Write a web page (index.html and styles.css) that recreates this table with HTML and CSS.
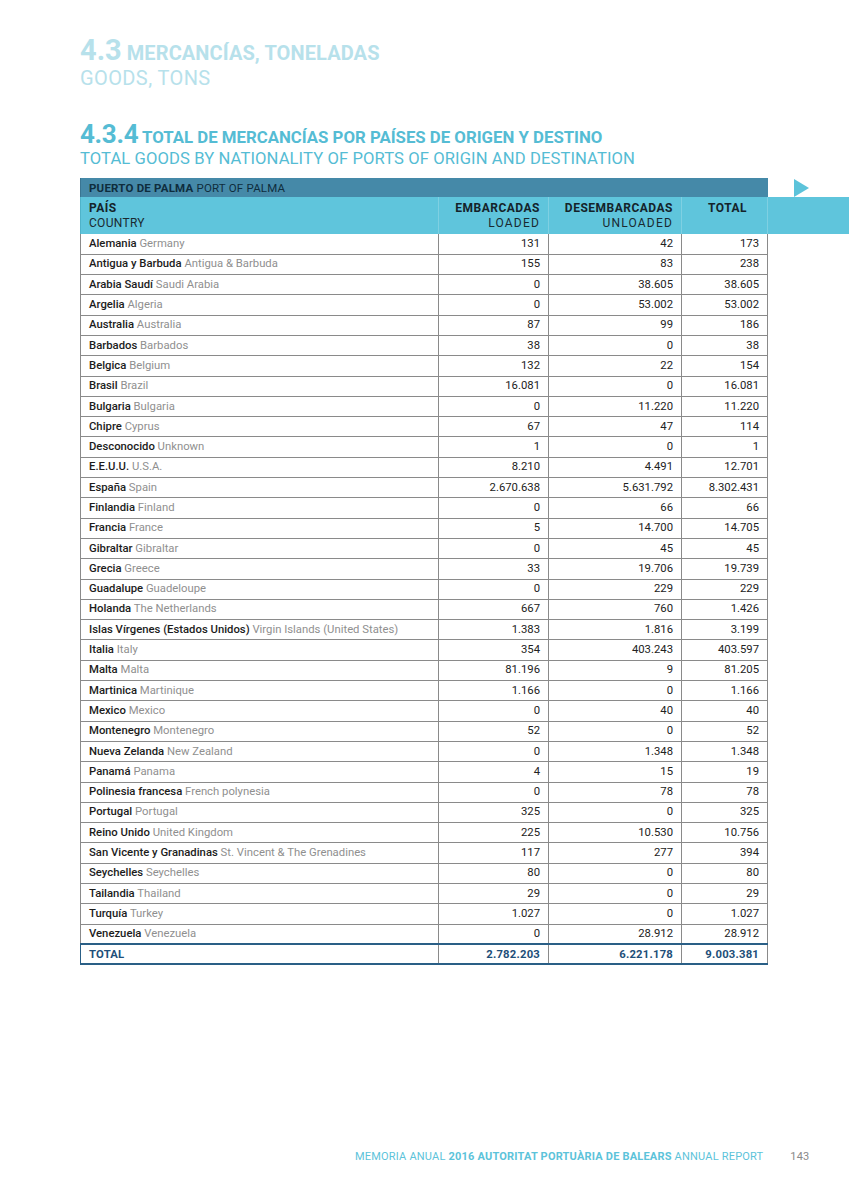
FILE: index.html
```html
<!DOCTYPE html>
<html lang="es">
<head>
<meta charset="utf-8">
<title>4.3 Mercancías, toneladas</title>
<link rel="stylesheet" href="styles.css">
</head>
<body>
<div class="page">
  <header class="section-head">
    <h1 class="h1"><span class="num">4.3</span> MERCANCÍAS, TONELADAS</h1>
    <div class="h1-sub">GOODS, TONS</div>
  </header>

  <section class="sub-head">
    <h2 class="h2"><span class="num">4.3.4</span> TOTAL DE MERCANCÍAS POR PAÍSES DE ORIGEN Y DESTINO</h2>
    <div class="h2-sub">TOTAL GOODS BY NATIONALITY OF PORTS OF ORIGIN AND DESTINATION</div>
  </section>

  <table class="data">
    <colgroup>
      <col class="c-country"><col class="c-emb"><col class="c-des"><col class="c-tot"><col class="c-out">
    </colgroup>
    <thead>
      <tr class="band">
        <th colspan="4" class="band-cell"><b>PUERTO DE PALMA</b> PORT OF PALMA</th>
        <th class="tri-cell"><span class="tri"></span></th>
      </tr>
      <tr class="head">
        <th class="l"><b>PAÍS</b><br>COUNTRY</th>
        <th class="r"><b>EMBARCADAS</b><br><span class="wide">LOADED</span></th>
        <th class="r"><b>DESEMBARCADAS</b><br><span class="wide">UNLOADED</span></th>
        <th class="r top"><b>TOTAL</b></th>
        <th class="ext"></th>
      </tr>
    </thead>
    <tbody>
      <tr><td><b>Alemania</b> <span class="en">Germany</span></td><td>131</td><td>42</td><td>173</td><td class="ext"></td></tr>
      <tr><td><b>Antigua y Barbuda</b> <span class="en">Antigua &amp; Barbuda</span></td><td>155</td><td>83</td><td>238</td><td class="ext"></td></tr>
      <tr><td><b>Arabia Saudí</b> <span class="en">Saudi Arabia</span></td><td>0</td><td>38.605</td><td>38.605</td><td class="ext"></td></tr>
      <tr><td><b>Argelia</b> <span class="en">Algeria</span></td><td>0</td><td>53.002</td><td>53.002</td><td class="ext"></td></tr>
      <tr><td><b>Australia</b> <span class="en">Australia</span></td><td>87</td><td>99</td><td>186</td><td class="ext"></td></tr>
      <tr><td><b>Barbados</b> <span class="en">Barbados</span></td><td>38</td><td>0</td><td>38</td><td class="ext"></td></tr>
      <tr><td><b>Belgica</b> <span class="en">Belgium</span></td><td>132</td><td>22</td><td>154</td><td class="ext"></td></tr>
      <tr><td><b>Brasil</b> <span class="en">Brazil</span></td><td>16.081</td><td>0</td><td>16.081</td><td class="ext"></td></tr>
      <tr><td><b>Bulgaria</b> <span class="en">Bulgaria</span></td><td>0</td><td>11.220</td><td>11.220</td><td class="ext"></td></tr>
      <tr><td><b>Chipre</b> <span class="en">Cyprus</span></td><td>67</td><td>47</td><td>114</td><td class="ext"></td></tr>
      <tr><td><b>Desconocido</b> <span class="en">Unknown</span></td><td>1</td><td>0</td><td>1</td><td class="ext"></td></tr>
      <tr><td><b>E.E.U.U.</b> <span class="en">U.S.A.</span></td><td>8.210</td><td>4.491</td><td>12.701</td><td class="ext"></td></tr>
      <tr><td><b>España</b> <span class="en">Spain</span></td><td>2.670.638</td><td>5.631.792</td><td>8.302.431</td><td class="ext"></td></tr>
      <tr><td><b>Finlandia</b> <span class="en">Finland</span></td><td>0</td><td>66</td><td>66</td><td class="ext"></td></tr>
      <tr><td><b>Francia</b> <span class="en">France</span></td><td>5</td><td>14.700</td><td>14.705</td><td class="ext"></td></tr>
      <tr><td><b>Gibraltar</b> <span class="en">Gibraltar</span></td><td>0</td><td>45</td><td>45</td><td class="ext"></td></tr>
      <tr><td><b>Grecia</b> <span class="en">Greece</span></td><td>33</td><td>19.706</td><td>19.739</td><td class="ext"></td></tr>
      <tr><td><b>Guadalupe</b> <span class="en">Guadeloupe</span></td><td>0</td><td>229</td><td>229</td><td class="ext"></td></tr>
      <tr><td><b>Holanda</b> <span class="en">The Netherlands</span></td><td>667</td><td>760</td><td>1.426</td><td class="ext"></td></tr>
      <tr><td><b>Islas Vírgenes (Estados Unidos)</b> <span class="en">Virgin Islands (United States)</span></td><td>1.383</td><td>1.816</td><td>3.199</td><td class="ext"></td></tr>
      <tr><td><b>Italia</b> <span class="en">Italy</span></td><td>354</td><td>403.243</td><td>403.597</td><td class="ext"></td></tr>
      <tr><td><b>Malta</b> <span class="en">Malta</span></td><td>81.196</td><td>9</td><td>81.205</td><td class="ext"></td></tr>
      <tr><td><b>Martinica</b> <span class="en">Martinique</span></td><td>1.166</td><td>0</td><td>1.166</td><td class="ext"></td></tr>
      <tr><td><b>Mexico</b> <span class="en">Mexico</span></td><td>0</td><td>40</td><td>40</td><td class="ext"></td></tr>
      <tr><td><b>Montenegro</b> <span class="en">Montenegro</span></td><td>52</td><td>0</td><td>52</td><td class="ext"></td></tr>
      <tr><td><b>Nueva Zelanda</b> <span class="en">New Zealand</span></td><td>0</td><td>1.348</td><td>1.348</td><td class="ext"></td></tr>
      <tr><td><b>Panamá</b> <span class="en">Panama</span></td><td>4</td><td>15</td><td>19</td><td class="ext"></td></tr>
      <tr><td><b>Polinesia francesa</b> <span class="en">French polynesia</span></td><td>0</td><td>78</td><td>78</td><td class="ext"></td></tr>
      <tr><td><b>Portugal</b> <span class="en">Portugal</span></td><td>325</td><td>0</td><td>325</td><td class="ext"></td></tr>
      <tr><td><b>Reino Unido</b> <span class="en">United Kingdom</span></td><td>225</td><td>10.530</td><td>10.756</td><td class="ext"></td></tr>
      <tr><td><b>San Vicente y Granadinas</b> <span class="en">St. Vincent &amp; The Grenadines</span></td><td>117</td><td>277</td><td>394</td><td class="ext"></td></tr>
      <tr><td><b>Seychelles</b> <span class="en">Seychelles</span></td><td>80</td><td>0</td><td>80</td><td class="ext"></td></tr>
      <tr><td><b>Tailandia</b> <span class="en">Thailand</span></td><td>29</td><td>0</td><td>29</td><td class="ext"></td></tr>
      <tr><td><b>Turquía</b> <span class="en">Turkey</span></td><td>1.027</td><td>0</td><td>1.027</td><td class="ext"></td></tr>
      <tr><td><b>Venezuela</b> <span class="en">Venezuela</span></td><td>0</td><td>28.912</td><td>28.912</td><td class="ext"></td></tr>
    </tbody>
    <tfoot>
      <tr class="total"><td>TOTAL</td><td>2.782.203</td><td>6.221.178</td><td>9.003.381</td><td class="ext"></td></tr>
    </tfoot>
  </table>

  <footer class="foot">
    <span class="foot-text">MEMORIA ANUAL <b>2016 AUTORITAT PORTUÀRIA DE BALEARS</b> ANNUAL REPORT</span>
    <span class="page-num">143</span>
  </footer>
</div>
</body>
</html>
```

FILE: styles.css
```css
* { box-sizing: border-box; }
html, body { margin: 0; padding: 0; background: #fff; }
body {
  font-family: Roboto, "Noto Sans", "Liberation Sans", sans-serif;
  color: #1a1a1a;
}
.page {
  width: 849px;
  height: 1200px;
  padding: 37px 0 0 80px;
  display: flex;
  flex-direction: column;
}

/* Section headings */
.section-head { color: #b7e1eb; }
.h1 {
  margin: 0;
  font-size: 20px;
  line-height: 27px;
  font-weight: 700;
  letter-spacing: 0.1px;
}
.h1 .num { font-size: 29px; letter-spacing: 0; }
.h1-sub {
  font-size: 20px;
  line-height: 22px;
  font-weight: 400;
  letter-spacing: 0.4px;
}

.sub-head { margin-top: 34px; color: #55bcd4; }
.h2 {
  margin: 0;
  font-size: 16.8px;
  line-height: 23px;
  font-weight: 700;
}
.h2 .num { font-size: 26px; letter-spacing: -0.3px; }
.h2-sub {
  font-size: 16.6px;
  line-height: 20px;
  font-weight: 400;
  letter-spacing: 0.1px;
}

/* Table */
.data {
  margin-top: 9px;
  border-collapse: collapse;
  table-layout: fixed;
  width: 769px;
  font-size: 11.3px;
}
.c-country { width: 358px; }
.c-emb { width: 110px; }
.c-des { width: 133px; }
.c-tot { width: 86px; }
.c-out { width: 82px; }

.band-cell {
  background: #4589a8;
  color: #0f2d3d;
  text-align: left;
  font-weight: 400;
  height: 19px;
  padding: 0 0 0 8px;
  font-size: 11.5px;
  letter-spacing: 0.2px;
  border-left: 1px solid #3a7592;
}
.band-cell b { font-weight: 700; }
.tri-cell { padding: 0 0 0 26px; text-align: left; vertical-align: middle; }
.tri {
  display: block;
  width: 0; height: 0;
  border-top: 9.5px solid transparent;
  border-bottom: 9.5px solid transparent;
  border-left: 15px solid #5cc3da;
}

.head th {
  background: #5fc5dc;
  height: 37px;
  font-size: 12px;
  font-weight: 400;
  line-height: 14.5px;
  color: #1a2a30;
  padding: 4px 8px 4px 8px;
  vertical-align: top;
  border-left: 1px solid #7fd0e2;
  letter-spacing: 0.3px;
}
.head th:first-child { border-left: 1px solid #4fb3ca; }
.head th b { font-weight: 700; color: #14232a; letter-spacing: 0.5px; }
.head th.l { text-align: left; }
.head th.r { text-align: right; }
.head th.top { text-align: center; padding-left: 14px; }
.head th.ext { border-left: 1px solid #7fd0e2; }
.wide { letter-spacing: 1.2px; }

tbody td {
  height: 20.3px;
  padding: 0 8px;
  border: 1px solid #8a8a8a;
  text-align: right;
  white-space: nowrap;
  color: #222;
  line-height: 18px;
}
tbody td:first-child { text-align: left; color: #1c1c1c; }
tbody td b { font-weight: 500; }
.en { color: #8f8f8f; }
tbody tr:first-child td { border-top: none; }
td.ext, tfoot td.ext { border: none; background: transparent; }
tbody td.ext { border-left: 1px solid #8a8a8a; border-top: none; border-bottom: none; border-right: none; }

.total td {
  height: 20px;
  padding: 0 8px;
  font-weight: 700;
  color: #1e4f79;
  text-align: right;
  border-top: 2px solid #2a5f86;
  border-bottom: 2px solid #2a5f86;
  border-left: 1px solid #8a8a8a;
  border-right: 1px solid #8a8a8a;
  letter-spacing: 0.2px;
}
.total td:first-child { text-align: left; border-left: 1px solid #2a5f86; }
.total td.ext { border: none; border-left: 1px solid #8a8a8a; }

/* Footer */
.foot {
  margin-top: auto;
  margin-bottom: 37px;
  display: flex;
  align-items: center;
  padding-left: 275px;
  font-size: 11px;
  color: #5cc3da;
  letter-spacing: 0.2px;
}
.foot-text b { font-weight: 700; }
.page-num { margin-left: 27px; color: #8a8a8a; }
```
